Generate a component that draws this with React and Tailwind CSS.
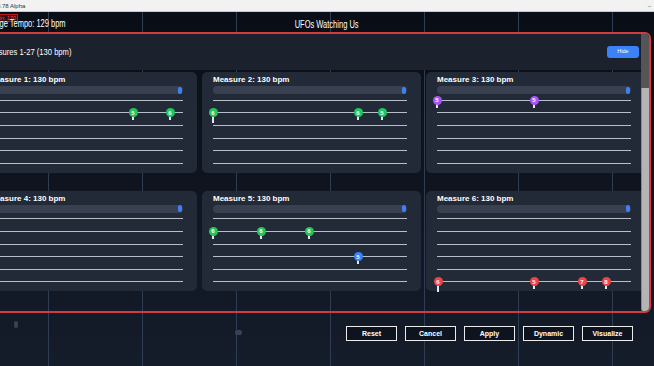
import React from "react";

const pinColors = {
  green: "bg-[#22c55e]",
  purple: "bg-[#a855f7]",
  blue: "bg-[#3b82f6]",
  red: "bg-[#ef4444]",
};

const cards = [
  {
    n: 1,
    pins: [
      { row: 1, x: 144, label: "5", color: "green" },
      { row: 1, x: 181, label: "6", color: "green" },
    ],
  },
  {
    n: 2,
    pins: [
      { row: 1, x: 0, label: "6", color: "green", long: true },
      { row: 1, x: 145, label: "6", color: "green" },
      { row: 1, x: 169, label: "5", color: "green" },
    ],
  },
  {
    n: 3,
    pins: [
      { row: 0, x: 0, label: "5", color: "purple" },
      { row: 0, x: 97, label: "5", color: "purple" },
    ],
  },
  { n: 4, pins: [] },
  {
    n: 5,
    pins: [
      { row: 1, x: 0, label: "6", color: "green" },
      { row: 1, x: 48, label: "6", color: "green" },
      { row: 1, x: 96, label: "6", color: "green" },
      { row: 3, x: 145, label: "5", color: "blue" },
    ],
  },
  {
    n: 6,
    pins: [
      { row: 5, x: 1, label: "6", color: "red", long: true },
      { row: 5, x: 97, label: "5", color: "red" },
      { row: 5, x: 145, label: "7", color: "red" },
      { row: 5, x: 169, label: "8", color: "red" },
    ],
  },
];

function Pin({ x, label, color, long }) {
  return (
    <div
      className="absolute top-1/2 -mt-[4.5px] -ml-[4.5px] w-[9px] h-[9px]"
      style={{ left: x }}
    >
      <div
        className={`absolute left-1/2 top-[6px] -ml-[1px] w-[2px] bg-[#e5e7eb] ${
          long ? "h-[9px]" : "h-[6px]"
        }`}
      />
      <div
        className={`relative w-[9px] h-[9px] rounded-full ${pinColors[color]} flex items-center justify-center text-white text-[6px] font-bold leading-none`}
      >
        {label}
      </div>
    </div>
  );
}

function MeasureCard({ card }) {
  const rows = [0, 1, 2, 3, 4, 5];

  return (
    <div className="bg-[#222937] rounded-[5px] pl-[11px] pr-[14px] pt-[4px] pb-[3px]">
      <div className="h-[8px] flex items-center text-[8px] font-bold text-white leading-none whitespace-nowrap">
        Measure {card.n}: 130 bpm
      </div>

      <div className="mt-[2px] h-[8px] rounded-full bg-[#394150] flex justify-end items-center pr-[1px]">
        <div className="w-[4px] h-[7px] rounded-[2px] bg-[#3b82f6]" />
      </div>

      {rows.map((r) => (
        <div key={r} className="relative h-[12.6px] flex items-center">
          <div className="w-full h-px bg-[#b9bfc9]" />
          {card.pins
            .filter((p) => p.row === r)
            .map((p, i) => (
              <Pin key={i} {...p} />
            ))}
        </div>
      ))}
    </div>
  );
}

export default function App() {
  return (
    <div className="relative w-[654px] h-[366px] overflow-hidden flex flex-col font-['Liberation_Sans',Arial,sans-serif] bg-[image:repeating-linear-gradient(90deg,transparent_0_48px,#2f3d52_48px_49px,transparent_49px_94px),linear-gradient(180deg,#090d15,#151c2a)]">

      {/* window title bar */}
      <div className="h-[12px] shrink-0 bg-[#f2f2f2] border-b border-[#c9c9c9] flex items-center justify-between pr-[3px] text-[6px] text-[#333] leading-none">
        <span className="-ml-[6px]">v0.78 Alpha</span>
        <span className="text-[#555]">–</span>
      </div>

      {/* top header */}
      <div className="relative h-[20px] shrink-0 flex items-center pt-[2px]">
        <span className="absolute top-[2px] -left-[7px] px-[1px] border border-[#b91c1c] bg-[#3a0d12] text-[#ef4444] text-[5.5px] leading-[6px]">
          Min: 170
        </span>
        <span className="-ml-[20px] text-[10px] text-white whitespace-nowrap scale-x-[0.75] origin-left">
          Average Tempo: 129 bpm
        </span>
        <div className="absolute left-0 right-0 top-[4px] bottom-0 flex items-center justify-center">
          <span className="text-[10px] text-white whitespace-nowrap scale-x-[0.75]">
            UFOs Watching Us
          </span>
        </div>
      </div>

      {/* measures panel */}
      <div className="-ml-[40px] w-[691px] h-[281px] shrink-0 border-2 border-[#d23b3f] rounded-[6px] flex overflow-hidden">
        <div className="flex-1 flex flex-col overflow-hidden">
          <div className="h-[36px] shrink-0 bg-[#1b212d] flex items-center justify-between pl-[22px] pr-[2px]">
            <span className="text-[9.5px] text-white whitespace-nowrap scale-x-[0.8] origin-left">
              Measures 1-27 (130 bpm)
            </span>
            <button className="w-[32px] h-[12px] rounded-[3px] bg-[#3b82f6] text-white text-[5.5px] leading-none">
              Hide
            </button>
          </div>

          <div className="pt-[2px] pl-[16px] grid grid-cols-[219px_219px_219px] gap-x-[5px] gap-y-[18px]">
            {cards.map((c) => (
              <MeasureCard key={c.n} card={c} />
            ))}
          </div>
        </div>

        <div className="w-[8px] shrink-0 flex flex-col">
          <div className="h-[54px] bg-[#555555]" />
          <div className="flex-1 bg-[#b4b4b4] rounded-b-[2px] border-l border-[#8a8a8a]" />
        </div>
      </div>

      {/* faint markers on the canvas */}
      <div className="absolute left-[14px] top-[321px] w-[4px] h-[7px] rounded-[2px] bg-[#34425a]" />
      <div className="absolute left-[235px] top-[330px] w-[7px] h-[5px] rounded-[2px] bg-[#34425a]" />

      {/* bottom buttons */}
      <div className="flex justify-end gap-[8px] pr-[21px] pt-[13px]">
        {["Reset", "Cancel", "Apply", "Dynamic", "Visualize"].map((b) => (
          <button
            key={b}
            className="w-[51px] h-[15px] border-[1.5px] border-[#ececec] bg-[#0e141f] text-white text-[7px] font-bold leading-none"
          >
            {b}
          </button>
        ))}
      </div>
    </div>
  );
}
